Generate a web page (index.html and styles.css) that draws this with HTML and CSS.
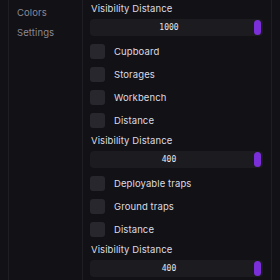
FILE: index.html
```html
<!DOCTYPE html>
<html lang="en">
<head>
  <meta charset="UTF-8" />
  <meta name="viewport" content="width=device-width, initial-scale=1" />
  <title>Settings</title>
  <link rel="stylesheet" href="styles.css">
</head>
<body>
  <div class="app">
    <div class="rail"></div>
    <nav class="sidebar">
      <a class="nav-item">Colors</a>
      <a class="nav-item">Settings</a>
    </nav>
    <main class="content">
      <div class="slider-group">
        <div class="label">Visibility Distance</div>
        <div class="slider"><span class="value">1000</span><span class="thumb"></span></div>
      </div>
      <label class="check"><span class="box"></span>Cupboard</label>
      <label class="check"><span class="box"></span>Storages</label>
      <label class="check"><span class="box"></span>Workbench</label>
      <label class="check"><span class="box"></span>Distance</label>
      <div class="slider-group">
        <div class="label">Visibility Distance</div>
        <div class="slider"><span class="value">400</span><span class="thumb"></span></div>
      </div>
      <label class="check"><span class="box"></span>Deployable traps</label>
      <label class="check"><span class="box"></span>Ground traps</label>
      <label class="check"><span class="box"></span>Distance</label>
      <div class="slider-group">
        <div class="label">Visibility Distance</div>
        <div class="slider"><span class="value">400</span><span class="thumb"></span></div>
      </div>
    </main>
    <div class="edge"></div>
  </div>
</body>
</html>
```

FILE: styles.css
```css
html, body {
  margin: 0;
  height: 100%;
  background: #121116;
  font-family: Inter, "DejaVu Sans", sans-serif;
  overflow: hidden;
}
.app {
  display: flex;
  height: 280px;
}
.rail {
  width: 8px;
  border-right: 1px solid #1f1e24;
}
.sidebar {
  width: 74px;
  border-right: 1px solid #1f1e24;
  display: flex;
  flex-direction: column;
  gap: 8px;
  padding: 7px 0 0 8px;
  box-sizing: border-box;
}
.nav-item {
  color: #8b8a92;
  font-size: 9.5px;
  line-height: 12px;
  letter-spacing: 0.1px;
}
.content {
  width: 188px;
  padding: 4px 8px 0 7px;
  box-sizing: border-box;
  display: flex;
  flex-direction: column;
  gap: 8px;
}
.edge {
  width: 8px;
  border-left: 1px solid #1f1e24;
}
.slider-group {
  display: flex;
  flex-direction: column;
}
.label {
  color: #dcdce0;
  font-size: 9.5px;
  line-height: 10px;
  letter-spacing: 0.1px;
  margin-bottom: 5px;
  padding-left: 1px;
}
.slider {
  height: 17px;
  background: #1c1b20;
  border-radius: 4px;
  display: flex;
  align-items: center;
  padding: 0 2px 0 0;
}
.value {
  flex: 1;
  text-align: center;
  color: #e8e8ec;
  font-family: "DejaVu Sans Mono", monospace;
  font-size: 8px;
  padding-right: 6px;
}
.thumb {
  width: 7px;
  height: 15px;
  border-radius: 4px;
  background: #7b2fd8;
}
.check {
  display: flex;
  align-items: center;
  gap: 9px;
  height: 15px;
  color: #dcdce0;
  font-size: 9.5px;
  letter-spacing: 0.1px;
}
.box {
  width: 15px;
  height: 15px;
  border-radius: 3px;
  background: #28272d;
}
```
